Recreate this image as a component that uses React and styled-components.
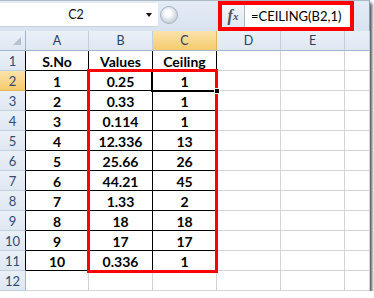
import React from 'react';
import styled, { createGlobalStyle } from 'styled-components';

const GlobalStyle = createGlobalStyle`
  html, body {
    margin: 0;
    padding: 0;
    background: #ffffff;
  }
  body {
    font-family: Lato, "Liberation Sans", Arial, sans-serif;
  }
`;

const Window = styled.div`
  width: 370px;
  height: 291px;
  background: #ffffff;
  box-shadow: 2px 3px 3px rgba(0, 0, 0, 0.7);
  display: flex;
  flex-direction: column;
`;

const FormulaBar = styled.div`
  display: flex;
  align-items: flex-start;
  height: 31px;
  box-sizing: border-box;
  border-top: 1px solid #aeb9c6;
  border-right: 1px solid #8d9aab;
  background: linear-gradient(#e3ebf5, #d9e3ef);
`;

const NameBox = styled.div`
  display: flex;
  align-items: center;
  width: 158px;
  height: 24px;
  margin-top: 2px;
  background: #ffffff;
  border-bottom: 1px solid #c9d3df;
  box-sizing: border-box;
`;

const NameText = styled.span`
  flex: 1;
  text-align: center;
  padding-left: 6px;
  font-size: 12.5px;
  color: #111;
`;

const DropArrow = styled.span`
  width: 0;
  height: 0;
  margin-right: 6px;
  border-left: 3.5px solid transparent;
  border-right: 3.5px solid transparent;
  border-top: 4px solid #111;
`;

const Splitter = styled.div`
  width: 18px;
  height: 18px;
  margin: 5px 0 0 2px;
  border-radius: 50%;
  box-sizing: border-box;
  border: 1px solid #a7b4c3;
  background: radial-gradient(circle at 45% 40%, #ffffff 0 20%, #d2d9e2 60%, #b9c3cf 100%);
`;

const FxBox = styled.div`
  display: flex;
  width: 136px;
  height: 30px;
  margin-left: 40px;
  box-sizing: border-box;
  border: 4px solid #ff0000;
  background: #ffffff;
`;

const FxLabel = styled.span`
  display: flex;
  align-items: center;
  justify-content: center;
  width: 22px;
  border-right: 1px solid #a9b8ca;
  background: linear-gradient(#f1f5fa, #e2e9f2);
  font-family: "Liberation Serif", "DejaVu Serif", serif;
  font-style: italic;
  font-weight: bold;
  font-size: 16px;
  color: #48525f;

  sub {
    font-size: 11px;
    vertical-align: -1px;
  }
`;

const FormulaInput = styled.span`
  flex: 1;
  display: flex;
  align-items: center;
  padding-left: 6px;
  font-size: 13px;
  color: #000;
`;

const Sheet = styled.div`
  display: grid;
  grid-template-columns: 26px 63px 64px 64px 64px 64px 25px;
  grid-template-rows: repeat(13, 20px);
`;

const headerBg = ($active) =>
  $active
    ? 'linear-gradient(#fbe3ad, #f6cb6b)'
    : 'linear-gradient(#eaf0f8, #dfe7f2)';

const CornerCell = styled.div`
  grid-row: 1;
  grid-column: 1;
  position: relative;
  box-sizing: border-box;
  border-right: 1px solid #9eb6ce;
  border-bottom: 1px solid #9eb6ce;
  background: linear-gradient(#eaf0f8, #dfe7f2);

  &::after {
    content: '';
    position: absolute;
    right: 4px;
    bottom: 5px;
    width: 0;
    height: 0;
    border-left: 8px solid transparent;
    border-bottom: 8px solid #b4c1d1;
  }
`;

const ColHeader = styled.div`
  grid-row: 1;
  grid-column: ${({ $col }) => $col};
  display: flex;
  align-items: center;
  justify-content: center;
  box-sizing: border-box;
  border-right: 1px solid ${({ $active }) => ($active ? '#e1b55a' : '#c1cfde')};
  border-bottom: 1px solid #9eb6ce;
  background: ${({ $active }) => headerBg($active)};
  font-size: 12.5px;
  color: #2a3f5e;
`;

const RowHeader = styled.div`
  grid-row: ${({ $row }) => $row};
  grid-column: 1;
  display: flex;
  align-items: center;
  justify-content: center;
  padding-top: 1px;
  box-sizing: border-box;
  border-right: 1px solid ${({ $edge }) => ($edge ? '#000000' : '#9eb6ce')};
  border-bottom: 1px solid ${({ $active }) => ($active ? '#e1b55a' : '#c1cfde')};
  background: ${({ $active }) => headerBg($active)};
  font-size: 13px;
  color: #2f4b74;
`;

const Cell = styled.div`
  grid-row: ${({ $row }) => $row};
  grid-column: ${({ $col }) => $col};
  box-sizing: border-box;
  border-right: 1px solid ${({ $table }) => ($table ? '#000000' : '#d4d4d4')};
  border-bottom: 1px solid ${({ $table }) => ($table ? '#000000' : '#d4d4d4')};
  padding-top: 1px;
  text-align: center;
  line-height: 19px;
  font-size: 14px;
  font-weight: bold;
  color: #000;
`;

const Selection = styled.div`
  grid-column: 4;
  grid-row: 3;
  position: relative;
  margin: -2px -1px -1px -2px;
  border: 2px solid #000000;
  box-shadow: inset 0 0 0 1px #ffffff;
`;

const FillHandle = styled.span`
  position: absolute;
  right: -4px;
  bottom: -4px;
  z-index: 3;
  width: 4px;
  height: 4px;
  background: #000;
  border: 1px solid #fff;
`;

const RedFrame = styled.div`
  grid-column: 3 / 5;
  grid-row: 3 / 13;
  position: relative;
  z-index: 2;
  margin: -2px -1px -2px -2px;
  border: 3px solid #ff0000;
  pointer-events: none;
`;

const columns = ['A', 'B', 'C', 'D', 'E', ''];

const data = [
  ['S.No', 'Values', 'Ceiling'],
  ['1', '0.25', '1'],
  ['2', '0.33', '1'],
  ['3', '0.114', '1'],
  ['4', '12.336', '13'],
  ['5', '25.66', '26'],
  ['6', '44.21', '45'],
  ['7', '1.33', '2'],
  ['8', '18', '18'],
  ['9', '17', '17'],
  ['10', '0.336', '1'],
  ['', '', ''],
];

const App = () => (
  <>
    <GlobalStyle />
    <Window>
      <FormulaBar>
        <NameBox>
          <NameText>C2</NameText>
          <DropArrow />
        </NameBox>
        <Splitter />
        <FxBox>
          <FxLabel>
            f<sub>x</sub>
          </FxLabel>
          <FormulaInput>=CEILING(B2,1)</FormulaInput>
        </FxBox>
      </FormulaBar>
      <Sheet>
        <CornerCell />
        {columns.map((c, i) => (
          <ColHeader key={`h${i}`} $col={i + 2} $active={c === 'C'}>
            {c}
          </ColHeader>
        ))}
        {data.map((row, r) => {
          const inTable = r < 11;
          const gridRow = r + 2;
          const cells = [...row, '', '', ''];
          return (
            <React.Fragment key={r}>
              <RowHeader $row={gridRow} $active={r === 1} $edge={inTable}>
                {r + 1}
              </RowHeader>
              {cells.map((v, c) => (
                <Cell key={c} $row={gridRow} $col={c + 2} $table={inTable && c < 3}>
                  {v}
                </Cell>
              ))}
            </React.Fragment>
          );
        })}
        <Selection>
          <FillHandle />
        </Selection>
        <RedFrame />
      </Sheet>
    </Window>
  </>
);

export default App;
